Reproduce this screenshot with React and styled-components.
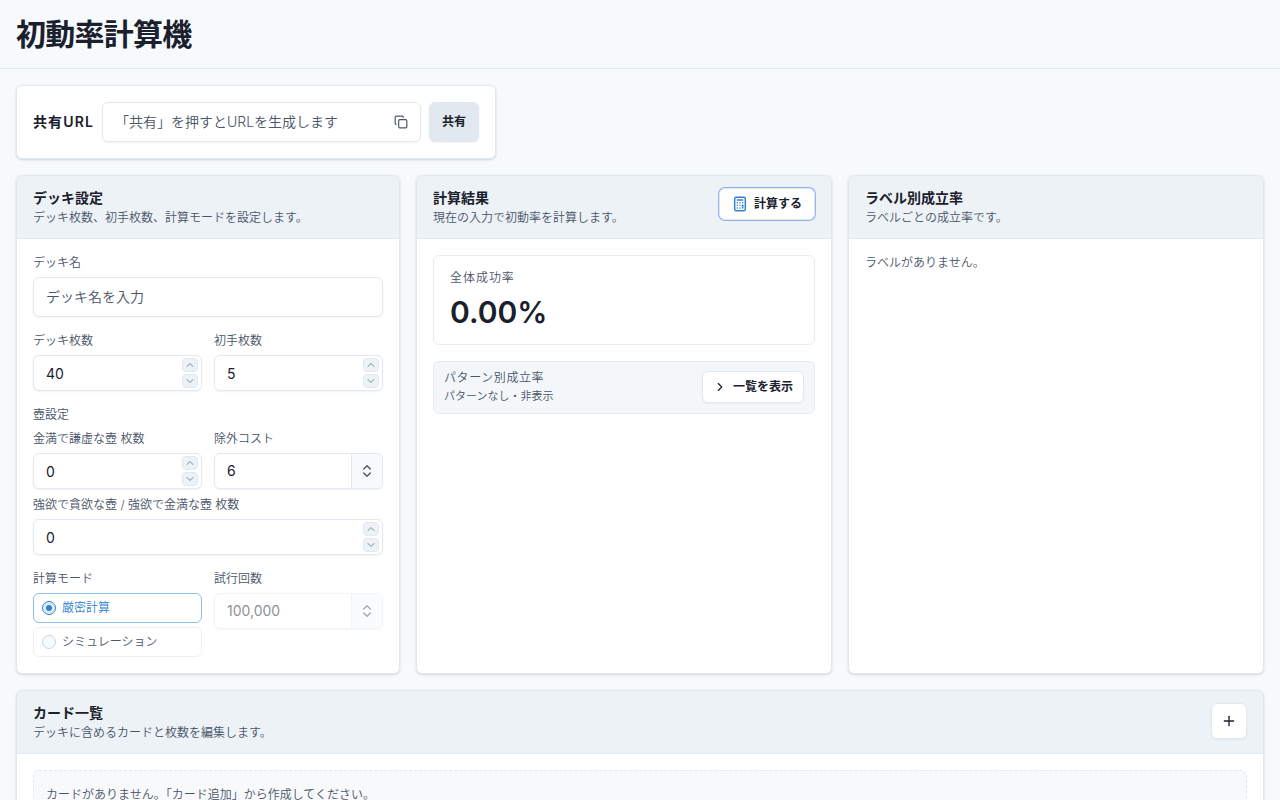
import React from 'react'
import styled, { createGlobalStyle } from 'styled-components'
import { Calculator, ChevronDown, ChevronRight, ChevronUp, ChevronsUpDown, Copy, Plus } from 'lucide-react'


const GlobalStyle = createGlobalStyle`
  * {
    box-sizing: border-box;
  }
  body {
    margin: 0;
    background: #f6fafd;
    color: #1a202c;
    font-family: Inter, "Noto Sans CJK JP", sans-serif;
    font-size: 14px;
    line-height: 20px;
  }
  button, input {
    font-family: inherit;
    color: inherit;
  }
`

const Header = styled.header`
  height: 69px;
  padding: 16px;
  border-bottom: 1px solid #e2e8f0;
`

const Title = styled.h1`
  margin: 0;
  font-size: 30px;
  line-height: 36px;
  font-weight: 600;
  letter-spacing: -0.025em;
`

const Main = styled.main`
  display: flex;
  flex-direction: column;
  gap: 16px;
  padding: 16px;
`

const Card = styled.section`
  background: #fff;
  border: 1px solid #e2e8f0;
  border-radius: 6px;
  overflow: hidden;
  box-shadow: 0 1px 3px rgba(0, 0, 0, 0.1), 0 1px 2px rgba(0, 0, 0, 0.06);
`

const ShareCard = styled(Card)`
  display: flex;
  align-items: center;
  gap: 8px;
  width: 480px;
  padding: 16px;
`

const ShareLabel = styled.span`
  font-weight: 600;
  letter-spacing: 0.08em;
  white-space: nowrap;
`

const Control = styled.div`
  display: flex;
  align-items: center;
  width: 100%;
  height: ${props => props.$tall ? '40px' : '36px'};
  border: 1px solid #e2e8f0;
  border-radius: 6px;
  background: #fff;
  box-shadow: 0 1px 2px rgba(0, 0, 0, 0.05);
  overflow: hidden;
  opacity: ${props => props.$disabled ? 0.5 : 1};
`

const Input = styled.input`
  flex: 1;
  min-width: 0;
  height: 100%;
  padding: 0 12px ${props => props.$lift ? '2px' : 0};
  border: 0;
  outline: 0;
  background: transparent;
  font-size: 14px;
  &::placeholder {
    color: #4a5568;
    font-weight: 350;
    opacity: 1;
  }
`

const CopyButton = styled.button`
  display: flex;
  padding: 0;
  margin-right: 12px;
  border: 0;
  background: none;
  color: #4a5568;
`

const Button = styled.button`
  display: inline-flex;
  align-items: center;
  justify-content: center;
  flex-shrink: 0;
  gap: 6px;
  height: ${props => props.$height || 32}px;
  padding: 0 ${props => props.$pad || 12}px;
  border: 1px solid #e2e8f0;
  border-radius: 6px;
  background: ${props => props.$solid ? '#e2e8f0' : '#fff'};
  box-shadow: ${props => props.$ring ? '0 0 0 1px #90b4f0' : '0 1px 2px rgba(0, 0, 0, 0.05)'};
  font-size: 12px;
  line-height: 16px;
  font-weight: 600;
  white-space: nowrap;
`

const IconButton = styled(Button)`
  width: 36px;
  height: 36px;
  padding: 0;
`

const Columns = styled.div`
  display: grid;
  grid-template-columns: 12fr 13fr 13fr;
  gap: 16px;
`

const CardHeader = styled.div`
  display: flex;
  align-items: flex-start;
  justify-content: space-between;
  height: 63px;
  padding: 12px 16px;
  background: #edf2f7;
  border-bottom: 1px solid #e2e8f0;
`

const CardTitle = styled.h2`
  margin: 0;
  font-size: 14px;
  line-height: 20px;
  font-weight: 600;
`

const Small = styled.p`
  margin: 0;
  font-size: 12px;
  line-height: 16px;
  font-weight: 350;
  color: #4a5568;
  letter-spacing: ${props => props.$spacing || 'normal'};
`

const CardBody = styled.div`
  display: flex;
  flex-direction: column;
  gap: 16px;
  padding: 16px;
`

const Stack = styled.div`
  display: flex;
  flex-direction: column;
  gap: ${props => props.$gap}px;
`

const Pair = styled.div`
  display: grid;
  grid-template-columns: repeat(2, minmax(0, 1fr));
  align-items: start;
  gap: 12px;
`

const Spinner = styled.div`
  display: flex;
  flex-direction: column;
  gap: 2px;
  padding-right: 3px;
`

const SpinButton = styled.button`
  display: flex;
  align-items: center;
  justify-content: center;
  width: 16px;
  height: 14px;
  padding: 0;
  border: 1px solid #e2e8f0;
  border-radius: 4px;
  background: #edf2f7;
  color: #7d8695;
`

const SelectTrigger = styled.button`
  display: flex;
  align-items: center;
  justify-content: center;
  width: 31px;
  height: 100%;
  padding: 0;
  border: 0;
  border-left: 1px solid #e2e8f0;
  background: #f7f9fc;
  color: #4a5568;
`

const Radio = styled.div`
  display: flex;
  align-items: center;
  gap: 6px;
  height: 30px;
  padding: 0 8px;
  border: 1px solid ${props => props.$checked ? '#90c0ea' : '#edf0f4'};
  border-radius: 6px;
  font-size: 12px;
  line-height: 16px;
  font-weight: 350;
  color: ${props => props.$checked ? '#3182ce' : '#4a5568'};
`

const RadioDot = styled.span`
  display: flex;
  align-items: center;
  justify-content: center;
  width: 14px;
  height: 14px;
  border: 1px solid ${props => props.$checked ? '#3182ce' : '#cbd5e0'};
  border-radius: 50%;
  background: ${props => props.$checked ? '#e1ecf7' : '#f6fafd'};
  &::after {
    content: '';
    width: 6px;
    height: 6px;
    border-radius: 50%;
    background: ${props => props.$checked ? '#3182ce' : 'transparent'};
  }
`

const Result = styled.div`
  height: 90px;
  padding: 14px 16px 12px;
  border: 1px solid #e8ecf2;
  border-radius: 6px;
`

const Rate = styled.div`
  margin-top: 6px;
  font-size: 30px;
  line-height: 40px;
  font-weight: 600;
`

const PatternBar = styled.div`
  display: flex;
  align-items: center;
  justify-content: space-between;
  height: 53px;
  padding: 9px 10px 10px;
  border: 1px solid #e5eaf1;
  border-radius: 6px;
  background: #f3f7fa;
`

const PatternNote = styled(Small)`
  font-size: 11px;
`

const Empty = styled.div`
  padding: 16px 12px;
  border: 1px dashed #e2e8f0;
  border-radius: 6px;
  background: #f7f9fb;
`

const CardHead = ({ title, text, children }) => (
  <CardHeader>
    <Stack $gap={2}>
      <CardTitle>{title}</CardTitle>
      <Small>{text}</Small>
    </Stack>
    {children}
  </CardHeader>
)

const Field = ({ label, children }) => (
  <Stack $gap={6}>
    <Small as="label">{label}</Small>
    {children}
  </Stack>
)

const NumberField = ({ label, value }) => (
  <Field label={label}>
    <Control>
      <Input defaultValue={value} />
      <Spinner>
        <SpinButton><ChevronUp size={12} /></SpinButton>
        <SpinButton><ChevronDown size={12} /></SpinButton>
      </Spinner>
    </Control>
  </Field>
)

const SelectField = ({ label, value, disabled }) => (
  <Field label={label}>
    <Control $disabled={disabled}>
      <Input $lift defaultValue={value} disabled={disabled} />
      <SelectTrigger disabled={disabled}><ChevronsUpDown size={16} /></SelectTrigger>
    </Control>
  </Field>
)

const App = () => {
  const [mode, setMode] = React.useState('exact')
  return (
    <>
      <GlobalStyle />
      <Header>
        <Title>初動率計算機</Title>
      </Header>
      <Main>
        <ShareCard>
          <ShareLabel>共有URL</ShareLabel>
          <Control $tall>
            <Input $lift placeholder="「共有」を押すとURLを生成します" readOnly />
            <CopyButton><Copy size={14} /></CopyButton>
          </Control>
          <Button $solid $height={40}>共有</Button>
        </ShareCard>

        <Columns>
          <Card>
            <CardHead title="デッキ設定" text="デッキ枚数、初手枚数、計算モードを設定します。" />
            <CardBody>
              <Field label="デッキ名">
                <Control $tall>
                  <Input $lift placeholder="デッキ名を入力" />
                </Control>
              </Field>
              <Pair>
                <NumberField label="デッキ枚数" value="40" />
                <NumberField label="初手枚数" value="5" />
              </Pair>
              <Stack $gap={8}>
                <Small>壺設定</Small>
                <Pair>
                  <NumberField label="金満で謙虚な壺 枚数" value="0" />
                  <SelectField label="除外コスト" value="6" />
                </Pair>
                <NumberField label="強欲で貪欲な壺 / 強欲で金満な壺 枚数" value="0" />
              </Stack>
              <Pair>
                <Field label="計算モード">
                  <Stack $gap={4}>
                    <Radio $checked={mode === 'exact'} onClick={() => setMode('exact')}>
                      <RadioDot $checked={mode === 'exact'} />
                      厳密計算
                    </Radio>
                    <Radio $checked={mode === 'simulation'} onClick={() => setMode('simulation')}>
                      <RadioDot $checked={mode === 'simulation'} />
                      シミュレーション
                    </Radio>
                  </Stack>
                </Field>
                <SelectField label="試行回数" value="100,000" disabled={mode === 'exact'} />
              </Pair>
            </CardBody>
          </Card>

          <Card>
            <CardHead title="計算結果" text="現在の入力で初動率を計算します。">
              <Button $ring><Calculator size={16} strokeWidth={2.25} color="#3182ce" />計算する</Button>
            </CardHead>
            <CardBody>
              <Result>
                <Small $spacing="0.08em">全体成功率</Small>
                <Rate>0.00%</Rate>
              </Result>
              <PatternBar>
                <Stack $gap={2}>
                  <Small $spacing="0.05em">パターン別成立率</Small>
                  <PatternNote>パターンなし・非表示</PatternNote>
                </Stack>
                <Button $pad={10}><ChevronRight size={14} />一覧を表示</Button>
              </PatternBar>
            </CardBody>
          </Card>

          <Card>
            <CardHead title="ラベル別成立率" text="ラベルごとの成立率です。" />
            <CardBody>
              <Small>ラベルがありません。</Small>
            </CardBody>
          </Card>
        </Columns>

        <Card>
          <CardHead title="カード一覧" text="デッキに含めるカードと枚数を編集します。">
            <IconButton><Plus size={16} /></IconButton>
          </CardHead>
          <CardBody>
            <Empty>
              <Small>カードがありません。「カード追加」から作成してください。</Small>
            </Empty>
          </CardBody>
        </Card>
      </Main>
    </>
  )
}

export default App
